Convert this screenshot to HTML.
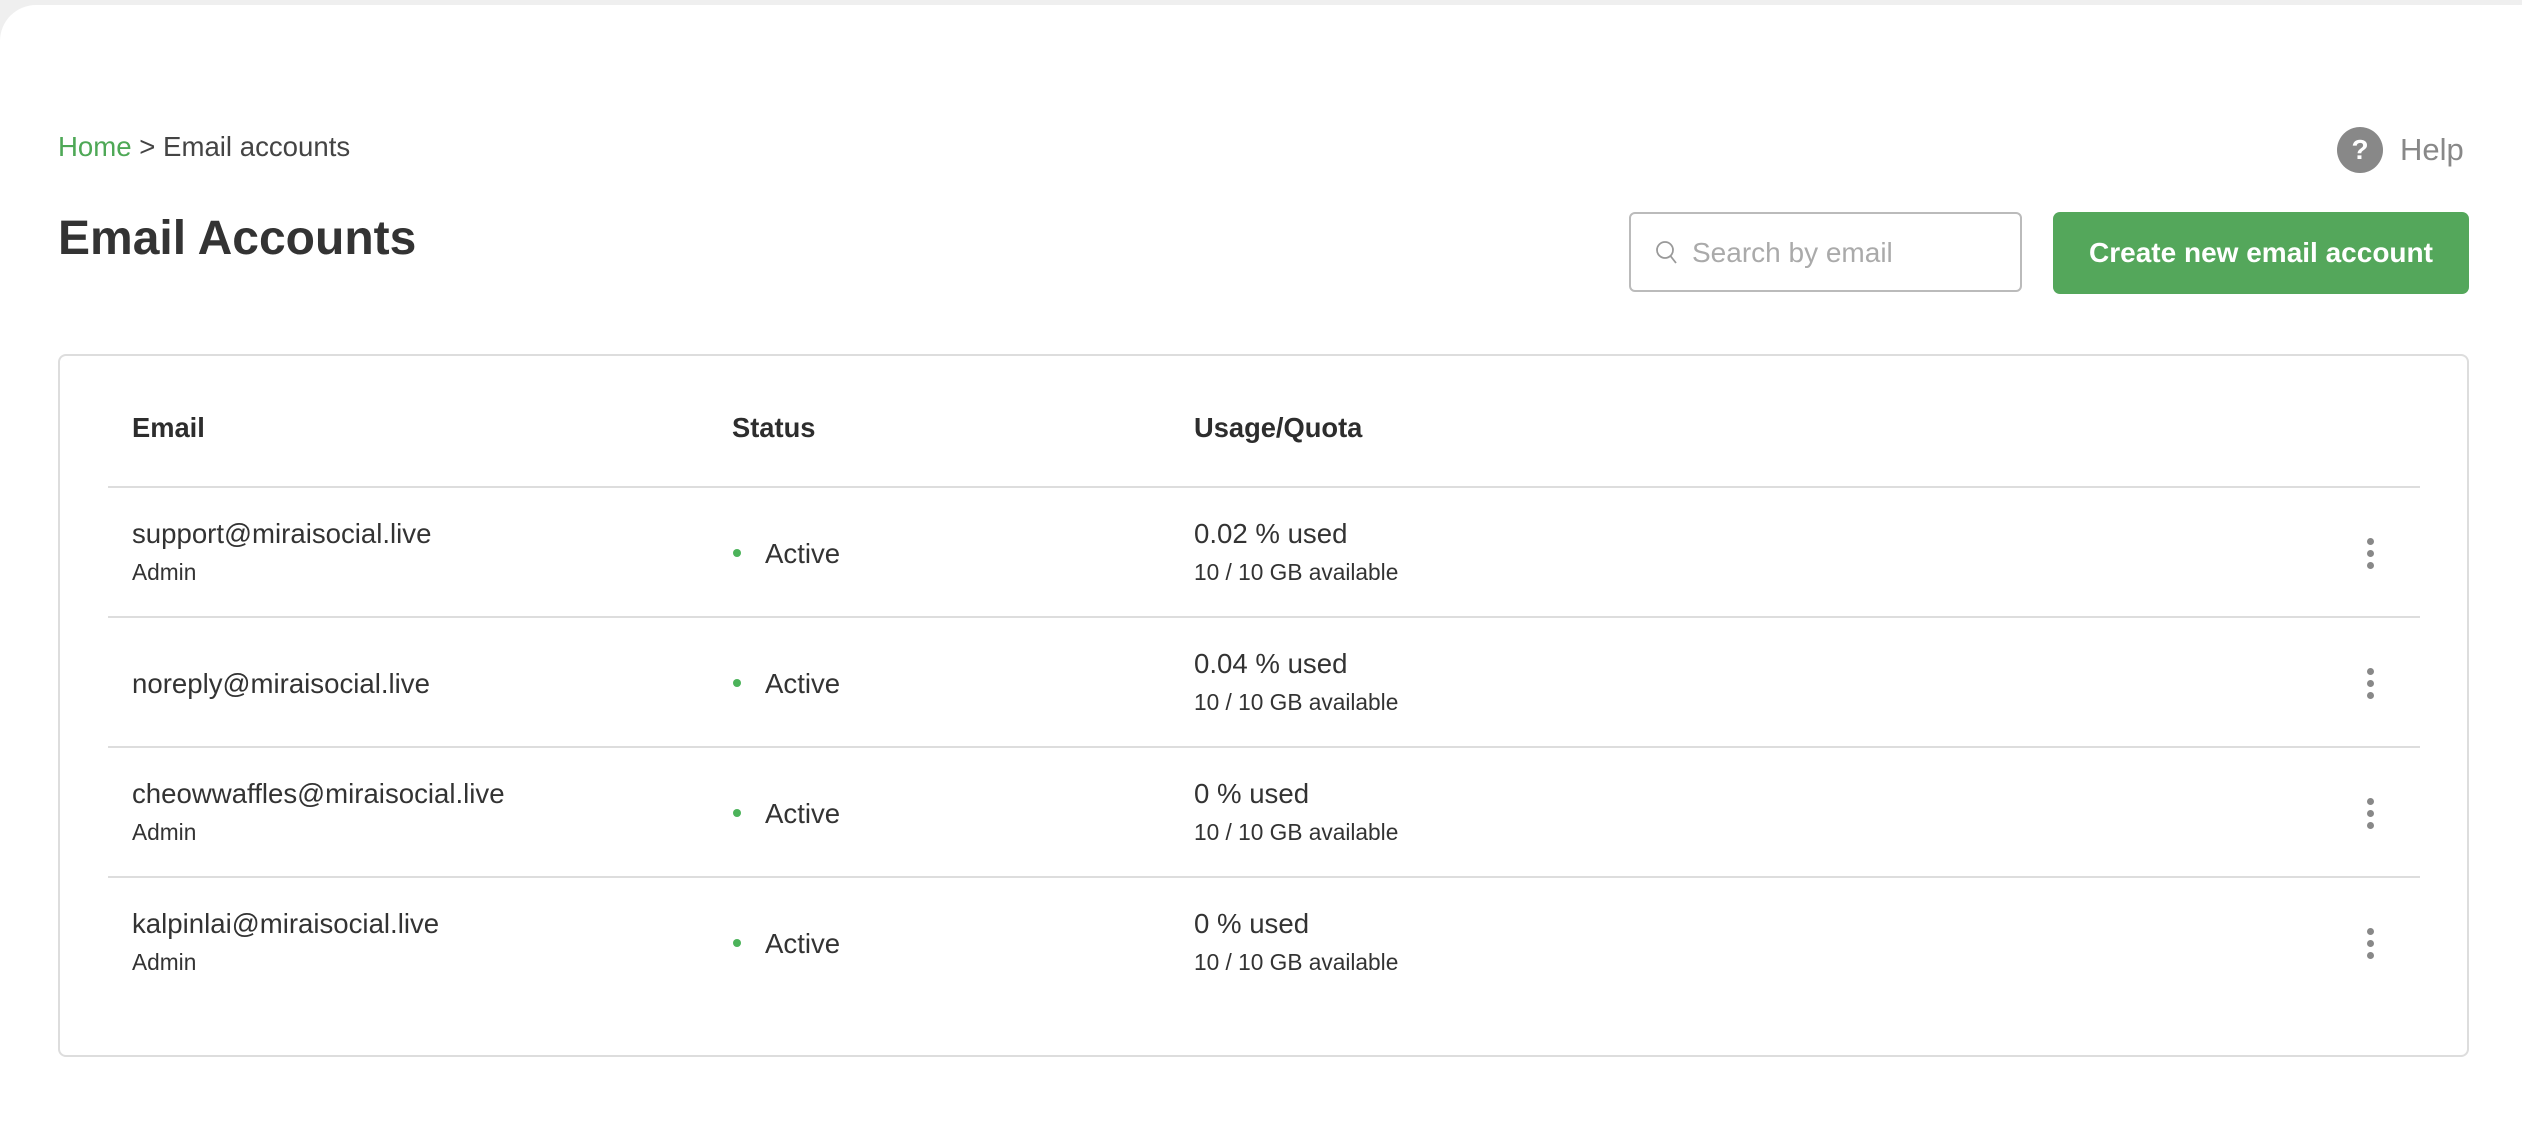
<!DOCTYPE html>
<html><head><meta charset="utf-8"><style>
*{margin:0;padding:0;box-sizing:border-box}
body{width:2522px;height:1106px;background:#efefef;font-family:"Liberation Sans",Arial,sans-serif;color:#333;position:relative;overflow:hidden}
.page{position:absolute;left:0;top:5px;width:2540px;height:1120px;background:#fff;border-radius:36px 0 0 0}
.a{position:absolute;white-space:nowrap;line-height:1}
.card{position:absolute;left:58px;top:354px;width:2411px;height:703px;border:2px solid #ddd;border-radius:8px}
.hl{position:absolute;left:108px;width:2312px;height:2px;background:#ddd}
.th{font-weight:bold;font-size:27.3px;color:#2d2d2d}
.em{font-size:27.6px;color:#333}
.sub{font-size:22.7px;color:#333}
.dot{position:absolute;width:8px;height:8px;border-radius:50%;background:#4cb35a}
.k{position:absolute;width:7px;height:7px;border-radius:50%;background:#888}
</style></head><body>
<div class="page"></div>
<div class="a" style="left:58px;top:133px;font-size:27.6px;color:#444"><span style="color:#4ea856">Home</span> &gt; Email accounts</div>
<div class="a" style="left:58px;top:215px;font-size:48px;font-weight:bold;color:#333">Email Accounts</div>
<div style="position:absolute;left:2337px;top:127px;width:46px;height:46px;border-radius:50%;background:#888;color:#fff;font-size:28px;font-weight:bold;text-align:center;line-height:46px">?</div>
<div class="a" style="left:2400px;top:134px;font-size:31px;color:#888">Help</div>
<div style="position:absolute;left:1629px;top:212px;width:393px;height:80px;border:2px solid #bbb;border-radius:6px"></div>
<svg style="position:absolute;left:1655px;top:240px" width="24" height="26" viewBox="0 0 24 26"><circle cx="10" cy="10" r="8" fill="none" stroke="#999" stroke-width="1.8"/><path d="M15.5 16 L21 23" stroke="#999" stroke-width="1.8"/></svg>
<div class="a" style="left:1692px;top:239px;font-size:28px;color:#aaa">Search by email</div>
<div style="position:absolute;left:2053px;top:212px;width:416px;height:82px;background:#54a75b;border-radius:7px;color:#fff;font-weight:bold;font-size:28px;text-align:center;line-height:82px">Create new email account</div>
<div class="card"></div>
<div class="a th" style="left:132px;top:414px">Email</div>
<div class="a th" style="left:732px;top:414px">Status</div>
<div class="a th" style="left:1194px;top:414px">Usage/Quota</div>
<div class="hl" style="top:486px"></div>
<div class="hl" style="top:616px"></div>
<div class="hl" style="top:746px"></div>
<div class="hl" style="top:876px"></div>

<div class="a em" style="left:132px;top:520px">support@miraisocial.live</div>
<div class="a sub" style="left:132px;top:561px">Admin</div>
<div class="a em" style="left:132px;top:670px">noreply@miraisocial.live</div>
<div class="a em" style="left:132px;top:780px">cheowwaffles@miraisocial.live</div>
<div class="a sub" style="left:132px;top:821px">Admin</div>
<div class="a em" style="left:132px;top:910px">kalpinlai@miraisocial.live</div>
<div class="a sub" style="left:132px;top:951px">Admin</div>

<div class="dot" style="left:733px;top:549px"></div><div class="a em" style="left:765px;top:540px">Active</div>
<div class="dot" style="left:733px;top:679px"></div><div class="a em" style="left:765px;top:670px">Active</div>
<div class="dot" style="left:733px;top:809px"></div><div class="a em" style="left:765px;top:800px">Active</div>
<div class="dot" style="left:733px;top:939px"></div><div class="a em" style="left:765px;top:930px">Active</div>

<div class="a em" style="left:1194px;top:520px">0.02 % used</div><div class="a sub" style="left:1194px;top:561px">10 / 10 GB available</div>
<div class="a em" style="left:1194px;top:650px">0.04 % used</div><div class="a sub" style="left:1194px;top:691px">10 / 10 GB available</div>
<div class="a em" style="left:1194px;top:780px">0 % used</div><div class="a sub" style="left:1194px;top:821px">10 / 10 GB available</div>
<div class="a em" style="left:1194px;top:910px">0 % used</div><div class="a sub" style="left:1194px;top:951px">10 / 10 GB available</div>

<div class="k" style="left:2367px;top:538px"></div><div class="k" style="left:2367px;top:550px"></div><div class="k" style="left:2367px;top:562px"></div>
<div class="k" style="left:2367px;top:668px"></div><div class="k" style="left:2367px;top:680px"></div><div class="k" style="left:2367px;top:692px"></div>
<div class="k" style="left:2367px;top:798px"></div><div class="k" style="left:2367px;top:810px"></div><div class="k" style="left:2367px;top:822px"></div>
<div class="k" style="left:2367px;top:928px"></div><div class="k" style="left:2367px;top:940px"></div><div class="k" style="left:2367px;top:952px"></div>
</body></html>
